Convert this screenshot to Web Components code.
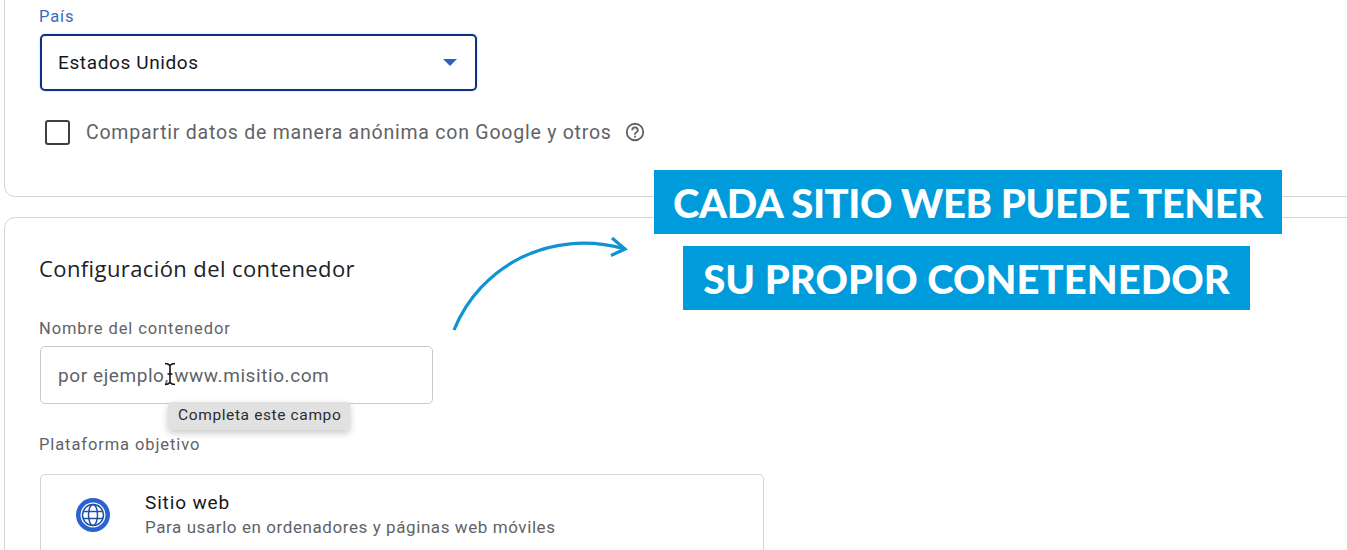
<!DOCTYPE html>
<html lang="es">
<head>
<meta charset="utf-8">
<title>Configuración del contenedor</title>
<style>
  html, body { margin: 0; height: 550px; overflow: hidden; background: #fff; }
  body { font-family: Roboto, "Liberation Sans", sans-serif; position: relative; }
  .page { height: 550px; overflow: hidden; }
  .stack { display: flex; flex-direction: column; gap: 20px; margin-top: -40px; padding-left: 4px; }
</style>
</head>
<body>
<div class="page">
  <div class="stack">
    <form-card style="height: 237px; padding-top: 47px">
      <field-label color="#3a6abf" style="margin: 0 0 8px -1px">País</field-label>
      <select-box>Estados Unidos</select-box>
      <check-row>Compartir datos de manera anónima con Google y otros</check-row>
    </form-card>
    <form-card style="height: 400px; padding-top: 36px">
      <card-title>Configuración del contenedor</card-title>
      <field-label style="margin: 38px 0 8px -1px">Nombre del contenedor</field-label>
      <text-input placeholder="por ejemplo, www.misitio.com"></text-input>
      <field-label style="margin: 32px 0 20px -1px">Plataforma objetivo</field-label>
      <platform-option name="Sitio web" detail="Para usarlo en ordenadores y páginas web móviles"></platform-option>
    </form-card>
  </div>
</div>
<callout-arrow></callout-arrow>
<callout-banner>
  <span style="padding: 0 19px; letter-spacing: -0.4px">CADA SITIO WEB PUEDE TENER</span>
  <span style="padding: 0 20px; letter-spacing: 0.05px; margin-right: 3px">SU PROPIO CONETENEDOR</span>
</callout-banner>

<script>
class FormCard extends HTMLElement {
  connectedCallback() {
    this.attachShadow({ mode: 'open' });
    this.shadowRoot.innerHTML = `
      <style>
        :host {
          display: block;
          box-sizing: border-box;
          width: 1400px;
          padding-left: 35px;
          background: #fff;
          border: 1px solid #d6d6d6;
          border-radius: 11px;
        }
      </style>
      <slot></slot>
    `;
  }
}

class FieldLabel extends HTMLElement {
  connectedCallback() {
    this.attachShadow({ mode: 'open' });
    const color = this.getAttribute('color') || '#5f6368';
    this.shadowRoot.innerHTML = `
      <style>
        :host {
          display: block;
          font-size: 16.5px;
          line-height: 18px;
          letter-spacing: 0.9px;
          color: ${color};
        }
      </style>
      <slot></slot>
    `;
  }
}

class CardTitle extends HTMLElement {
  connectedCallback() {
    this.attachShadow({ mode: 'open' });
    this.shadowRoot.innerHTML = `
      <style>
        :host {
          display: block;
          margin-left: -1px;
          font-family: "Open Sans", sans-serif;
          font-size: 22px;
          line-height: 28px;
          letter-spacing: 0.4px;
          color: #202124;
        }
      </style>
      <slot></slot>
    `;
  }
}

class SelectBox extends HTMLElement {
  connectedCallback() {
    this.attachShadow({ mode: 'open' });
    this.shadowRoot.innerHTML = `
      <style>
        :host {
          display: flex;
          box-sizing: border-box;
          align-items: center;
          justify-content: space-between;
          width: 437px;
          height: 57px;
          padding: 0 18px 0 16px;
          border: 2px solid #0d2f86;
          border-radius: 5px;
          box-shadow: 0 0 2px #9cc0f5;
          font-size: 19px;
          letter-spacing: 0.62px;
          color: #16181b;
        }
        .caret {
          width: 0;
          height: 0;
          border-left: 7.5px solid transparent;
          border-right: 7.5px solid transparent;
          border-top: 7px solid #2f62c0;
        }
      </style>
      <slot></slot>
      <span class="caret"></span>
    `;
  }
}

class CheckRow extends HTMLElement {
  connectedCallback() {
    this.attachShadow({ mode: 'open' });
    this.shadowRoot.innerHTML = `
      <style>
        :host {
          display: flex;
          align-items: center;
          height: 26px;
          margin: 28px 0 0 5px;
          font-size: 19.5px;
          letter-spacing: 0.77px;
          color: #5f6368;
        }
        .box {
          box-sizing: border-box;
          width: 25px;
          height: 25px;
          margin-right: 16px;
          border: 2px solid #3c4043;
          border-radius: 3px;
        }
        svg { margin-left: 12px; }
      </style>
      <span class="box"></span>
      <slot></slot>
      <svg width="22" height="22" viewBox="0 0 24 24" fill="#5f6368">
        <path d="M12 2a10 10 0 1 0 0 20 10 10 0 0 0 0-20zm0 18a8 8 0 1 1 0-16 8 8 0 0 1 0 16z"/>
        <path d="M11 16h2v2h-2zM12 6a4 4 0 0 0-4 4h2a2 2 0 1 1 4 0c0 2-3 1.75-3 5h2c0-2.25 3-2.5 3-5a4 4 0 0 0-4-4z"/>
      </svg>
    `;
  }
}

class TextInput extends HTMLElement {
  connectedCallback() {
    this.attachShadow({ mode: 'open' });
    const placeholder = this.getAttribute('placeholder');
    this.shadowRoot.innerHTML = `
      <style>
        :host {
          display: flex;
          position: relative;
          box-sizing: border-box;
          align-items: center;
          width: 393px;
          height: 58px;
          padding-left: 17px;
          border: 1px solid #c9cbce;
          border-radius: 5px;
          font-size: 19px;
          letter-spacing: 0.58px;
          color: #5f6368;
        }
        .cursor { position: absolute; left: 121px; top: 15px; }
        .tip {
          position: absolute;
          left: 127px;
          top: 55px;
          padding: 0 9px 0 10px;
          height: 28px;
          line-height: 27px;
          background: #e1e1e1;
          border-radius: 4px;
          box-shadow: 0 3px 7px rgba(0, 0, 0, 0.22);
          font-size: 15.5px;
          letter-spacing: 0.62px;
          color: #2b2c2e;
          white-space: nowrap;
        }
      </style>
      ${placeholder}
      <svg class="cursor" width="16" height="24" viewBox="0 0 16 24" fill="none" stroke="#111" stroke-width="1.6">
        <path d="M3 1.5c3 0 4 .8 5 2 1-1.2 2-2 5-2M8 3.5v17M3 22.5c3 0 4-.8 5-2 1 1.2 2 2 5 2M5.5 12h5"/>
      </svg>
      <span class="tip">Completa este campo</span>
    `;
  }
}

class PlatformOption extends HTMLElement {
  connectedCallback() {
    this.attachShadow({ mode: 'open' });
    this.shadowRoot.innerHTML = `
      <style>
        :host {
          display: flex;
          box-sizing: border-box;
          width: 724px;
          height: 120px;
          padding: 16px 0 0 34px;
          border: 1px solid #d3d4d6;
          border-radius: 5px;
        }
        svg { margin: 6px 34px 0 0; flex: none; }
        .name {
          font-size: 19px;
          line-height: 24px;
          letter-spacing: 0.85px;
          color: #16181b;
        }
        .detail {
          font-size: 17px;
          line-height: 24px;
          letter-spacing: 0.58px;
          color: #5f6368;
        }
      </style>
      <svg width="36" height="36" viewBox="0 0 36 36" fill="none">
        <circle cx="18" cy="18" r="17" fill="#2a62cf"/>
        <circle cx="18" cy="18" r="12.5" fill="#fff"/>
        <g stroke="#1f4fa8" stroke-width="1.5">
          <circle cx="18" cy="18" r="10.5"/>
          <ellipse cx="18" cy="18" rx="4.5" ry="10.5"/>
          <path d="M8 14.5h20M8 21.5h20"/>
        </g>
      </svg>
      <div>
        <div class="name">${this.getAttribute('name')}</div>
        <div class="detail">${this.getAttribute('detail')}</div>
      </div>
    `;
  }
}

class CalloutArrow extends HTMLElement {
  connectedCallback() {
    this.attachShadow({ mode: 'open' });
    this.shadowRoot.innerHTML = `
      <style>
        :host { display: block; position: absolute; left: 440px; top: 230px; }
        svg { display: block; }
      </style>
      <svg width="200" height="110" viewBox="0 0 200 110" fill="none" stroke="#0f93d2" stroke-width="3.2">
        <path d="M14 100C40 36 110 -2 185 19"/>
        <path d="M172 8l13 11-14 6.500"/>
      </svg>
    `;
  }
}

class CalloutBanner extends HTMLElement {
  connectedCallback() {
    this.attachShadow({ mode: 'open' });
    this.shadowRoot.innerHTML = `
      <style>
        :host {
          display: flex;
          position: absolute;
          left: 654px;
          top: 170px;
          width: 628px;
          flex-direction: column;
          align-items: center;
          gap: 12px;
        }
        ::slotted(span) {
          display: block;
          height: 64px;
          background: #009bdb;
          font-family: Lato, sans-serif;
          font-size: 40px;
          font-weight: 900;
          line-height: 66px;
          color: #fff;
          white-space: nowrap;
        }
      </style>
      <slot></slot>
    `;
  }
}

customElements.define('form-card', FormCard);
customElements.define('field-label', FieldLabel);
customElements.define('card-title', CardTitle);
customElements.define('select-box', SelectBox);
customElements.define('check-row', CheckRow);
customElements.define('text-input', TextInput);
customElements.define('platform-option', PlatformOption);
customElements.define('callout-arrow', CalloutArrow);
customElements.define('callout-banner', CalloutBanner);
</script>
</body>
</html>
